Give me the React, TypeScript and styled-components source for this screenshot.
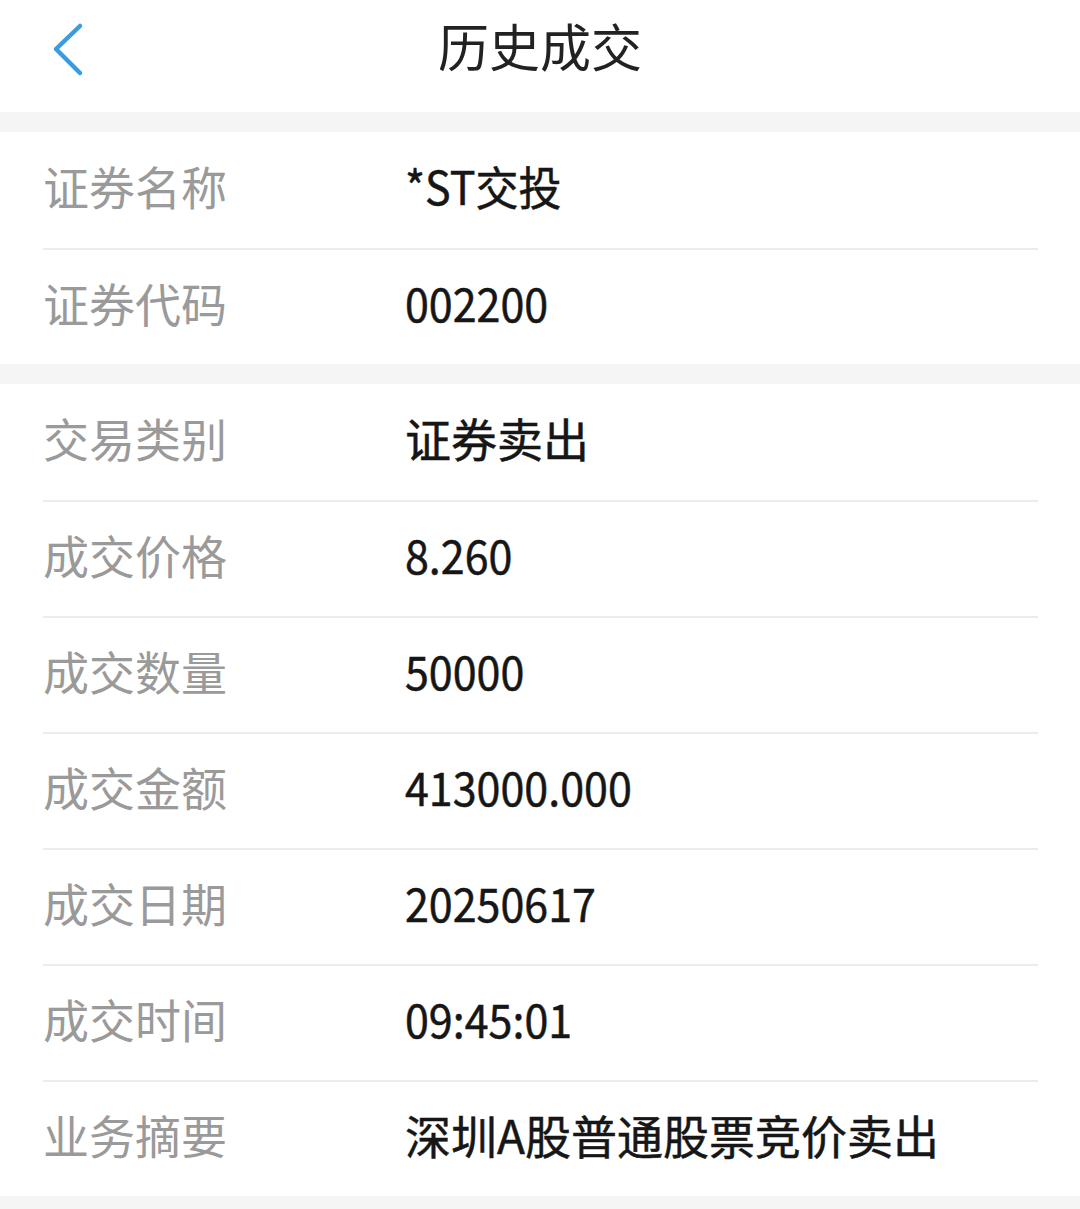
import styled, { createGlobalStyle } from "styled-components";

const Global = createGlobalStyle`
  html, body {
    margin: 0;
    padding: 0;
    background: #f5f5f5;
  }
  body {
    font-family: "Noto Sans CJK SC", "Noto Sans", sans-serif;
  }
`;

const Page = styled.div`
  width: 1080px;
  min-height: 1209px;
  background: #f5f5f5;
  display: flex;
  flex-direction: column;
  gap: 20px;
`;

const Header = styled.header`
  height: 112px;
  box-sizing: border-box;
  padding-bottom: 12px;
  background: #fff;
  display: grid;
  grid-template-columns: 140px 1fr 140px;
  align-items: center;
`;

const BackButton = styled.button`
  border: 0;
  background: none;
  padding: 0 0 0 50px;
  display: flex;
  align-items: center;
  cursor: pointer;
`;

const Title = styled.h1`
  margin: 0;
  text-align: center;
  font-size: 51px;
  font-weight: 400;
  color: #222;
  line-height: 1;
  padding-bottom: 10px;
`;

const Section = styled.section`
  background: #fff;
  padding: 0 42px 0 43px;
`;

const Row = styled.div`
  height: 116px;
  display: flex;
  align-items: center;
  border-top: 2px solid #ececec;
  box-sizing: border-box;
  padding-bottom: 10px;

  &:first-child {
    border-top: 0;
  }
`;

const Label = styled.span`
  width: 362px;
  flex-shrink: 0;
  font-size: 46px;
  color: #9a9a9a;
  line-height: 1;
`;

const Value = styled.span<{ $narrow: boolean }>`
  display: inline-block;
  font-size: 46px;
  font-weight: 400;
  color: #161616;
  line-height: 1;
  -webkit-text-stroke: 0.5px #161616;
  transform: ${(p) => (p.$narrow ? "scaleX(0.935)" : "none")};
  transform-origin: left center;
`;

type Item = [string, string];

const section1: Item[] = [
  ["证券名称", "*ST交投"],
  ["证券代码", "002200"],
];

const section2: Item[] = [
  ["交易类别", "证券卖出"],
  ["成交价格", "8.260"],
  ["成交数量", "50000"],
  ["成交金额", "413000.000"],
  ["成交日期", "20250617"],
  ["成交时间", "09:45:01"],
  ["业务摘要", "深圳A股普通股票竞价卖出"],
];

function Rows({ items }: { items: Item[] }) {
  return (
    <Section>
      {items.map(([k, v]) => (
        <Row key={k}>
          <Label>{k}</Label>
          <Value $narrow={/^[\d.:]+$/.test(v) || v.startsWith("*")}>{v}</Value>
        </Row>
      ))}
    </Section>
  );
}

export default function App() {
  return (
    <>
      <Global />
      <Page>
        <Header>
          <BackButton aria-label="返回">
            <svg width="36" height="56" viewBox="0 0 36 56">
              <path
                d="M30 4 L6 27 L30 51"
                fill="none"
                stroke="#3b9be0"
                strokeWidth="4.5"
                strokeLinecap="round"
                strokeLinejoin="round"
              />
            </svg>
          </BackButton>
          <Title>历史成交</Title>
          <span />
        </Header>
        <Rows items={section1} />
        <Rows items={section2} />
      </Page>
    </>
  );
}
